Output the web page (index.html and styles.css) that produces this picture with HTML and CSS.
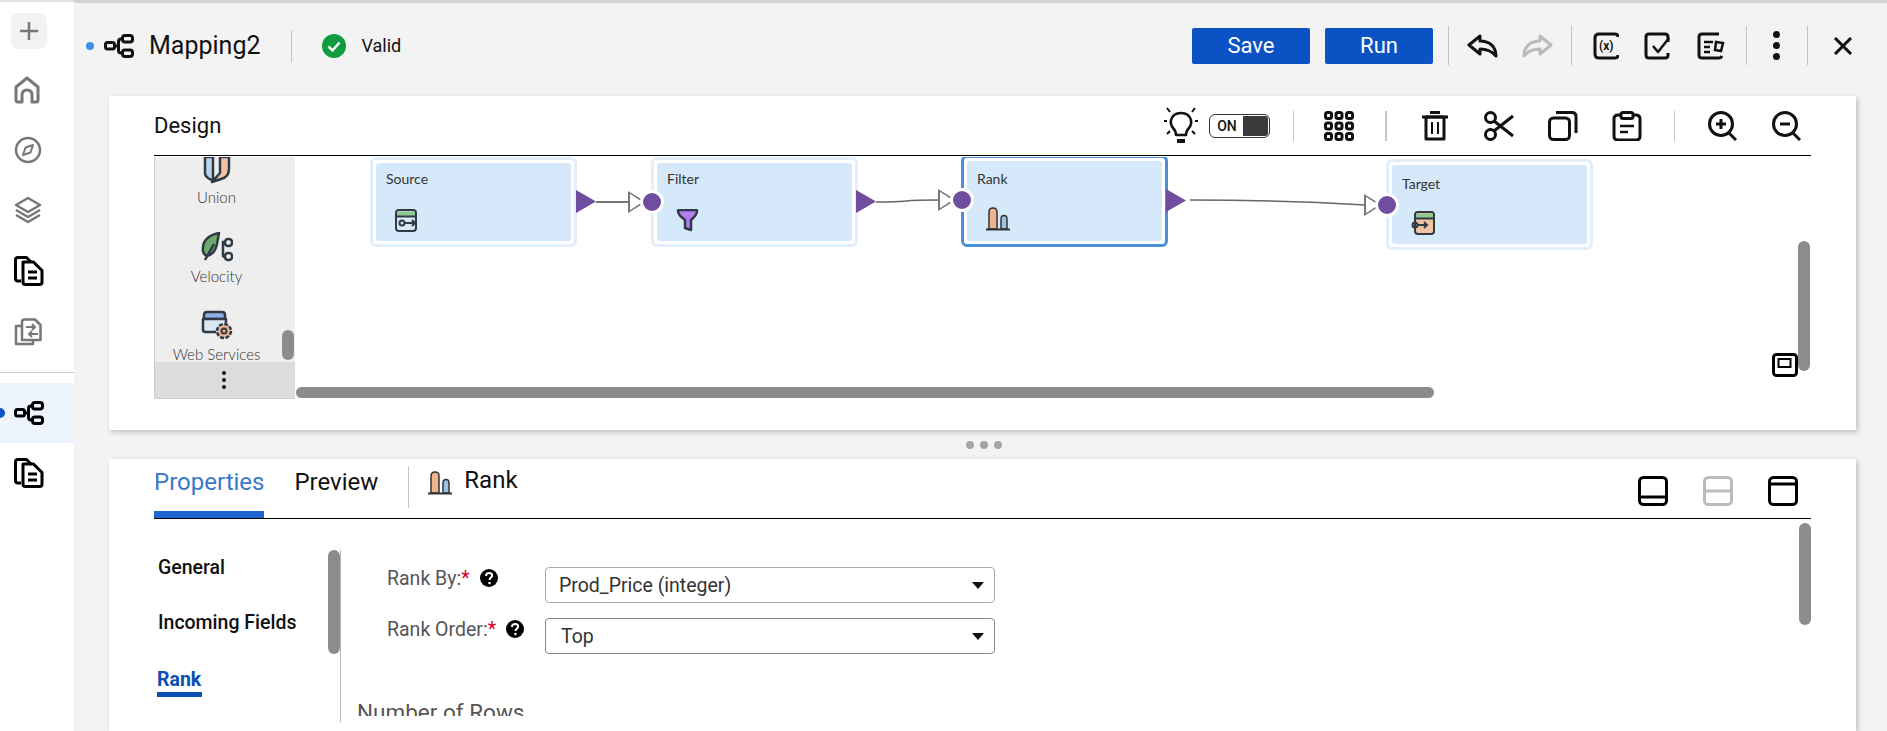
FILE: index.html
```html
<!DOCTYPE html>
<html lang="en">
<head>
    <meta charset="UTF-8">
    <meta name="viewport" content="width=device-width, initial-scale=1.0">
    <title>Mapping2</title>
    <link rel="stylesheet" href="styles.css">
</head>
<body>
    <svg class="defs" width="0" height="0">
        <symbol id="i-map" viewBox="0 0 30 24">
            <g fill="none" stroke="currentColor" stroke-width="3">
                <rect x="1.5" y="8.5" width="9" height="6.5" rx="2"/>
                <rect x="18.5" y="1.5" width="10" height="6.5" rx="2.5"/>
                <rect x="18.5" y="16" width="10" height="6.5" rx="2.5"/>
                <path d="M10.5 12h4M18.5 5h-1.500q-2.500 0-2.500 2.500v9q0 2.500 2.500 2.500h1.500"/>
            </g>
        </symbol>
        <symbol id="i-doc" viewBox="0 0 30 30">
            <g fill="none" stroke="currentColor" stroke-width="3" stroke-linejoin="round">
                <path d="M7 25H4q-2.500 0-2.500-2.500V4q0-2.500 2.500-2.500h8.500L17 6"/>
                <path d="M9 6h10.500l8.500 8.500V26q0 2.500-2.500 2.500H11.500Q9 28.500 9 26z"/>
                <path d="M14 16h9M14 22h9"/>
            </g>
        </symbol>
        <symbol id="i-rank" viewBox="0 0 24 24">
            <path d="M3 22V5q0-4 4-4t4 4v17z" fill="#eeb48f" stroke="#333" stroke-width="1.500"/>
            <path d="M15 22V12q0-3.500 3-3.500t3 3.500v10z" fill="#9cc3e6" stroke="#333" stroke-width="1.500"/>
            <path d="M0 22.500h24" stroke="#333" stroke-width="2"/>
        </symbol>
        <symbol id="i-help" viewBox="0 0 18 18">
            <circle cx="9" cy="9" r="9" fill="#000"/>
            <path d="M6 7q0-3 3.200-3 3 0 3 2.500c0 2-2.700 2.200-2.700 4.500" fill="none" stroke="#fff" stroke-width="2"/>
            <circle cx="9.500" cy="14" r="1.300" fill="#fff"/>
        </symbol>
    </svg>

    <div class="app">
        <nav class="sidebar">
            <div class="new-btn">
                <svg width="22" height="22" viewBox="0 0 22 22"><path d="M11 2v18M2 11h18" stroke="#777" stroke-width="2.500"/></svg>
            </div>
            <div class="side-icons">
                <svg class="side-icon" width="26" height="28" viewBox="0 0 26 28" fill="none" stroke="#777" stroke-width="3" stroke-linejoin="round"><path d="M8 26H4q-2 0-2-2V11L13 2l11 9v13q0 2-2 2h-4v-7q0-5-5-5t-5 5z"/></svg>
                <svg class="side-icon" width="28" height="28" viewBox="0 0 28 28" fill="none" stroke="#777" stroke-width="2.500"><circle cx="14" cy="14" r="12"/><path d="M19 9l-2.500 7.500L9 19l2.500-7.500z" stroke-width="2" stroke-linejoin="round"/></svg>
                <svg class="side-icon" width="28" height="28" viewBox="0 0 28 28" fill="none" stroke="#777" stroke-width="2.500" stroke-linejoin="round"><path d="M14 2l12 7-12 7L2 9z"/><path d="M2 14l12 7 12-7M2 19l12 7 12-7"/></svg>
                <svg class="side-icon side-black" width="30" height="30"><use href="#i-doc"/></svg>
                <svg class="side-icon" width="28" height="28" viewBox="0 0 28 28" fill="none" stroke="#777" stroke-width="2.500" stroke-linejoin="round"><path d="M8 22V4q0-2.500 2.500-2.500H21l5.500 5.500v15z"/><path d="M8 8H2v18h17v-4"/><path d="M12 9h9M18 6l3 3-3 3M24 16h-9M18 13l-3 3 3 3" stroke-width="2"/></svg>
            </div>
            <div class="side-rule"></div>
            <div class="side-active"><svg width="30" height="24" class="side-black"><use href="#i-map"/></svg></div>
            <svg class="side-icon side-black side-last" width="30" height="30"><use href="#i-doc"/></svg>
        </nav>

        <main class="main">
            <header class="topbar">
                <span class="dirty-dot"></span>
                <svg width="30" height="24"><use href="#i-map"/></svg>
                <span class="mapping-name">Mapping2</span>
                <span class="sep sep-title"></span>
                <svg class="valid-icon" width="24" height="24" viewBox="0 0 24 24"><circle cx="12" cy="12" r="12" fill="#0f9d3f"/><path d="M6.500 12.500l4 4 7-8" fill="none" stroke="#fff" stroke-width="2.500"/></svg>
                <span class="valid-text">Valid</span>

                <div class="top-actions">
                    <button class="btn">Save</button>
                    <button class="btn btn-run">Run</button>
                    <span class="sep sep-a"></span>
                    <svg width="32" height="24" viewBox="0 0 32 24" fill="none" stroke="#111" stroke-width="3" stroke-linejoin="round"><path d="M13 2L2 11l11 9v-5c6 0 11 1 16 7 0-9-6-15-16-15z"/></svg>
                    <svg class="redo" width="32" height="24" viewBox="0 0 32 24" fill="none" stroke="#bbb" stroke-width="3" stroke-linejoin="round"><path d="M19 2l11 9-11 9v-5c-6 0-11 1-16 7 0-9 6-15 16-15z"/></svg>
                    <span class="sep sep-b"></span>
                    <svg width="26" height="28" viewBox="0 0 26 28" fill="none" stroke="#111" stroke-width="3"><path d="M22 2H6Q2 2 2 6v16q0 4 4 4h16"/><path d="M22 2q3 0 3 3M22 26q3 0 3-3" stroke-width="3"/><text x="6" y="18" class="icon-x">(x)</text></svg>
                    <svg class="gap-a" width="28" height="28" viewBox="0 0 28 28" fill="none" stroke="#111" stroke-width="3" stroke-linejoin="round"><path d="M24 10V5q0-3-3-3H5Q2 2 2 5v18q0 3 3 3h16q3 0 3-3v-2"/><path d="M9 14l5 6 11-14" stroke-width="2.500"/></svg>
                    <svg class="gap-a" width="28" height="28" viewBox="0 0 28 28" fill="none" stroke="#111" stroke-width="3"><path d="M22 2H5Q2 2 2 5v18q0 3 3 3h17q2 0 3-2"/><path d="M7 10h9M7 15h6M7 20h6" stroke-width="2.500"/><path d="M19 10l7 1-2 8-6-1z" stroke-width="2.500"/></svg>
                    <span class="sep sep-c"></span>
                    <span class="kebab"><i></i><i></i><i></i></span>
                    <span class="sep sep-d"></span>
                    <svg class="close" width="20" height="18" viewBox="0 0 20 18" fill="none" stroke="#111" stroke-width="3"><path d="M2 1l16 16M18 1L2 17"/></svg>
                </div>
            </header>

            <section class="panel panel-design">
                <div class="panel-head">
                    <span class="panel-title">Design</span>
                    <div class="tools">
                        <svg width="34" height="42" viewBox="0 0 34 42" fill="none" stroke="#111" stroke-width="2.500"><path d="M12 30q0-4-3-7-3-4-2-8 2-7 10-7t10 7q1 4-2 8-3 3-3 7z" stroke-linejoin="round"/><path d="M13 36h8" stroke-width="4"/><path d="M3 3l3 4M31 3l-3 4M0 16h3M34 16h-3M3 29l3-3M31 29l-3-3" stroke-width="2"/></svg>
                        <div class="toggle"><span class="toggle-on">ON</span><span class="toggle-knob"></span></div>
                        <span class="sep sep-tool-a"></span>
                        <svg width="30" height="30" viewBox="0 0 30 30" fill="none" stroke="#111" stroke-width="3"><rect x="1.500" y="1.500" width="6" height="6" rx="2"/><rect x="12" y="1.500" width="6" height="6" rx="2"/><rect x="22.500" y="1.500" width="6" height="6" rx="2"/><rect x="1.500" y="12" width="6" height="6" rx="2"/><rect x="12" y="12" width="6" height="6" rx="2"/><rect x="22.500" y="12" width="6" height="6" rx="2"/><rect x="1.500" y="22.500" width="6" height="6" rx="2"/><rect x="12" y="22.500" width="6" height="6" rx="2"/><rect x="22.500" y="22.500" width="6" height="6" rx="2"/></svg>
                        <span class="sep sep-tool-b"></span>
                        <svg width="30" height="30" viewBox="0 0 30 30" fill="none" stroke="#111" stroke-width="3"><path d="M2 6h26M10 1.500h10"/><path d="M6 6v22h18V6z" stroke-linejoin="round"/><path d="M12 11v12M18 11v12" stroke-width="2"/></svg>
                        <svg class="tool-gap" width="30" height="30" viewBox="0 0 30 30" fill="none" stroke="#111" stroke-width="3"><circle cx="6.500" cy="6.500" r="5"/><circle cx="6.500" cy="23.500" r="5"/><path d="M10 10l19 15M10 20L29 5"/></svg>
                        <svg class="tool-gap" width="30" height="30" viewBox="0 0 30 30" fill="none" stroke="#111" stroke-width="3"><rect x="1.500" y="7" width="20" height="21.500" rx="4"/><path d="M8 1.500h16q4 0 4 4V22"/></svg>
                        <svg class="tool-gap" width="30" height="30" viewBox="0 0 30 30" fill="none" stroke="#111" stroke-width="3"><path d="M9 4H6Q2 4 2 8v17q0 4 4 4h18q4 0 4-4V8q0-4-4-4h-3"/><rect x="9" y="1.500" width="12" height="6" rx="2"/><path d="M8 15h14M8 21h8" stroke-width="2.500"/></svg>
                        <span class="sep sep-tool-c"></span>
                        <svg width="30" height="30" viewBox="0 0 30 30" fill="none" stroke="#111" stroke-width="3"><circle cx="14" cy="13" r="11.500"/><path d="M22 22l7 7M9 13h10M14 8v10"/></svg>
                        <svg class="tool-gap" width="30" height="30" viewBox="0 0 30 30" fill="none" stroke="#111" stroke-width="3"><circle cx="14" cy="13" r="11.500"/><path d="M22 22l7 7M9 13h10"/></svg>
                    </div>
                </div>

                <div class="design-body">
                    <aside class="palette">
                        <div class="palette-list">
                            <div class="palette-item palette-union">
                                <svg width="28" height="28" viewBox="0 0 28 28" stroke="#2f3a45" stroke-width="2.500" stroke-linejoin="round"><path d="M2 1v16q0 3 3 5l5 3V1z" fill="#bcd4ee"/><path d="M26 1v12q0 8-8 10l-9 3 8-9V1z" fill="#f2c3a2"/></svg>
                                <span>Union</span>
                            </div>
                            <div class="palette-item">
                                <svg width="32" height="30" viewBox="0 0 32 30" fill="none" stroke="#2f3a45" stroke-width="2.500"><path d="M18 1q-15 3-16 14-1 7 4 9 8-2 10-12z" fill="#6cab6c" stroke-linejoin="round"/><path d="M4 28l9-16"/><rect x="24" y="7" width="7" height="7" rx="3"/><rect x="24" y="21" width="7" height="7" rx="3"/><path d="M24 10h-2v13q0 2 2 2"/></svg>
                                <span>Velocity</span>
                            </div>
                            <div class="palette-item">
                                <svg width="32" height="30" viewBox="0 0 32 30" stroke="#2f3a45" stroke-width="2.500"><path d="M3 9V5q0-3 3-3h15q3 0 3 3v4z" fill="#8fb1e6"/><path d="M15 22H5q-3 0-3-2V9h23v4" fill="#dbe7f5" stroke-linejoin="round"/><circle cx="23" cy="21" r="7" fill="#eeb48f" stroke-dasharray="4 1.500"/><circle cx="23" cy="21" r="2.500" fill="none" stroke-width="2"/></svg>
                                <span>Web Services</span>
                            </div>
                        </div>
                        <div class="palette-more"><span class="kebab kebab-small"><i></i><i></i><i></i></span></div>
                        <span class="scroll scroll-palette"></span>
                    </aside>

                    <div class="canvas">
                        <svg class="links" width="1240" height="100" viewBox="0 0 1240 100" fill="none">
                            <path d="M301 45h32" stroke="#777" stroke-width="2"/>
                            <path d="M581 45q20 0 30-1 10-1 32-1" stroke="#666" stroke-width="1.500"/>
                            <path d="M895 43q90 0 175 5" stroke="#666" stroke-width="1.500"/>
                        </svg>
                        <div class="node node-source">
                            <span class="node-name">Source</span>
                            <svg class="node-icon" width="23" height="23" viewBox="0 0 23 23" stroke="#2f3a45" stroke-width="2"><rect x="1" y="1" width="20" height="21" rx="3" fill="#dbe7f5"/><path d="M2 2.500h18V7H2z" fill="#8fc78f" stroke="none"/><path d="M1 7.500h20" /><circle cx="7" cy="14" r="2.500" fill="none"/><path d="M9.500 14H20M17 11l3 3-3 3" fill="none"/></svg>
                        </div>
                        <div class="node node-filter">
                            <span class="node-name">Filter</span>
                            <svg class="node-icon" width="23" height="23" viewBox="0 0 23 23" stroke="#2f3a45" stroke-width="2.500" stroke-linejoin="round"><path d="M2 2q0-1 1-1h17q1 0 1 1 0 4-6 9v10l-6-2v-8Q2 6 2 2z" fill="#b37cf0"/></svg>
                        </div>
                        <div class="node node-rank">
                            <span class="node-name">Rank</span>
                            <svg class="node-icon" width="24" height="24"><use href="#i-rank"/></svg>
                        </div>
                        <div class="node node-target">
                            <span class="node-name">Target</span>
                            <svg class="node-icon" width="24" height="24" viewBox="0 0 24 24" stroke="#2f3a45" stroke-width="2"><rect x="4" y="1" width="19" height="22" rx="3" fill="#f2c3a2"/><path d="M5 2.500h17V7H5z" fill="#8fc78f" stroke="none"/><path d="M4 7.500h19"/><circle cx="4" cy="14" r="2.500" fill="none"/><path d="M6.500 14H16M13 11l3 3-3 3" fill="none"/></svg>
                        </div>
                        <span class="port-out port-source"></span>
                        <span class="port-in port-in-filter"></span>
                        <span class="port-dot dot-filter"></span>
                        <span class="port-out port-filter"></span>
                        <span class="port-in port-in-rank"></span>
                        <span class="port-dot dot-rank"></span>
                        <span class="port-out port-rank"></span>
                        <span class="port-in port-in-target"></span>
                        <span class="port-dot dot-target"></span>
                        <span class="scroll scroll-h"></span>
                        <span class="scroll scroll-v"></span>
                        <svg class="minimap" width="26" height="24" viewBox="0 0 26 24" fill="none" stroke="#000"><rect x="1.500" y="1.500" width="23" height="21" rx="3" stroke-width="3"/><rect x="6.500" y="6" width="12" height="8" stroke-width="2"/></svg>
                    </div>
                </div>
            </section>

            <div class="splitter"><i></i><i></i><i></i></div>

            <section class="panel panel-props">
                <div class="tabs">
                    <span class="tab tab-active">Properties</span>
                    <span class="tab">Preview</span>
                    <span class="sep sep-tab"></span>
                    <svg class="tab-icon" width="24" height="24"><use href="#i-rank"/></svg>
                    <span class="tab-node">Rank</span>
                    <div class="layout-btns">
                        <svg width="30" height="30" viewBox="0 0 30 30" fill="none" stroke="#000" stroke-width="3"><rect x="1.500" y="1.500" width="27" height="27" rx="4"/><path d="M2 21h26"/></svg>
                        <svg width="30" height="30" viewBox="0 0 30 30" fill="none" stroke="#bbb" stroke-width="3"><rect x="1.500" y="1.500" width="27" height="27" rx="4"/><path d="M2 15h26"/></svg>
                        <svg width="30" height="30" viewBox="0 0 30 30" fill="none" stroke="#000" stroke-width="3"><rect x="1.500" y="1.500" width="27" height="27" rx="4"/><path d="M2 8h26"/></svg>
                    </div>
                </div>

                <div class="props-body">
                    <div class="prop-nav">
                        <div class="prop-item">General</div>
                        <div class="prop-item">Incoming Fields</div>
                        <div class="prop-item prop-item-active"><span>Rank</span></div>
                        <span class="scroll scroll-nav"></span>
                    </div>
                    <div class="prop-form">
                        <div class="form-row">
                            <label class="form-label">Rank By:<span class="req">*</span><svg class="help" width="18" height="18"><use href="#i-help"/></svg></label>
                            <div class="select select-first">Prod_Price (integer)</div>
                        </div>
                        <div class="form-row">
                            <label class="form-label">Rank Order:<span class="req">*</span><svg class="help" width="18" height="18"><use href="#i-help"/></svg></label>
                            <div class="select select-second">Top</div>
                        </div>
                        <div class="form-section">Number of Rows</div>
                    </div>
                    <span class="scroll scroll-props"></span>
                </div>
            </section>
        </main>
    </div>
</body>
</html>
```

FILE: styles.css
```css
* {
    box-sizing: border-box;
}

html, body {
    height: 100%;
}

body {
    margin: 0;
    font-family: Roboto, Arial, sans-serif;
    color: #111;
    background-color: #f3f3f3;
    overflow: hidden;
}

.defs {
    position: absolute;
}

.app {
    display: flex;
    height: 731px;
}

/* left rail */
.sidebar {
    width: 74px;
    flex-shrink: 0;
    display: flex;
    flex-direction: column;
    background-color: #fff;
    border-top: 2px solid #e2e2e2;
    color: #000;
}

.new-btn {
    width: 36px;
    height: 36px;
    margin: 11px 0 0 11px;
    display: flex;
    align-items: center;
    justify-content: center;
    background-color: #f2f2f2;
    border-radius: 8px;
}

.side-icons {
    display: flex;
    flex-direction: column;
    gap: 32px;
    padding: 27px 0 0 14px;
}

.side-black {
    color: #000;
}

.side-rule {
    height: 1px;
    margin-top: 26px;
    background-color: #ccc;
}

.side-active {
    height: 60px;
    margin-top: 10px;
    padding-left: 14px;
    display: flex;
    align-items: center;
    background-color: #eef4fd;
    position: relative;
}

.side-active::before {
    content: "";
    position: absolute;
    left: -5px;
    top: 25px;
    width: 10px;
    height: 10px;
    border-radius: 50%;
    background-color: #0b52c4;
}

.side-last {
    margin: 15px 0 0 14px;
}

/* main column */
.main {
    flex: 1;
    min-width: 0;
    display: flex;
    flex-direction: column;
    border-top: 3px solid #d2d2d2;
}

.topbar {
    height: 93px;
    flex-shrink: 0;
    display: flex;
    align-items: center;
    padding: 0 34px 8px 12px;
}

.dirty-dot {
    width: 8px;
    height: 8px;
    margin-right: 10px;
    border-radius: 50%;
    background-color: #3b8fe8;
}

.mapping-name {
    margin-left: 15px;
    font-size: 25px;
}

.sep {
    width: 1px;
    background-color: #c4c4c4;
    flex-shrink: 0;
}

.sep-title {
    height: 32px;
    margin: 0 30px 0 31px;
}

.valid-text {
    margin-left: 15px;
    font-size: 18px;
}

.top-actions {
    margin-left: auto;
    display: flex;
    align-items: center;
}

.btn {
    width: 118px;
    height: 36px;
    border: none;
    border-radius: 2px;
    background-color: #0b52c4;
    color: #fff;
    font-family: Roboto, Arial, sans-serif;
    font-size: 22px;
}

.btn-run {
    width: 108px;
    margin-left: 15px;
}

.top-actions .sep {
    height: 39px;
}

.sep-a {
    margin: 0 18px 0 15px;
}

.redo {
    margin-left: 22px;
}

.sep-b {
    margin: 0 21px 0 18px;
}

.gap-a {
    margin-left: 25px;
}

.sep-c {
    margin: 0 26px 0 21px;
}

.kebab {
    display: flex;
    flex-direction: column;
    gap: 4px;
}

.kebab i {
    width: 7px;
    height: 7px;
    border-radius: 50%;
    background-color: #111;
}

.sep-d {
    margin: 0 25px 0 27px;
}

.close {
    display: block;
}

.icon-x {
    font-family: Roboto, Arial, sans-serif;
    font-size: 12px;
    font-weight: 700;
    fill: #111;
    stroke: none;
}

/* white panels */
.panel {
    margin: 0 31px 0 35px;
    padding: 0 45px;
    background-color: #fff;
    box-shadow: 2px 2px 5px rgba(0, 0, 0, 0.22);
}

.panel-design {
    height: 334px;
    flex-shrink: 0;
}

.panel-head {
    height: 60px;
    display: flex;
    align-items: center;
    justify-content: space-between;
    border-bottom: 1px solid #000;
}

.panel-title {
    font-size: 22px;
}

.tools {
    display: flex;
    align-items: center;
    margin-right: 10px;
}

.toggle {
    width: 61px;
    height: 24px;
    margin-left: 11px;
    display: flex;
    padding: 1px;
    border: 1px solid #333;
    border-radius: 6px;
}

.toggle-on {
    width: 32px;
    text-align: center;
    font-size: 14px;
    font-weight: 500;
    line-height: 20px;
}

.toggle-knob {
    flex: 1;
    background-color: #3a3a3a;
    border-radius: 0 3px 3px 0;
}

.tools .sep {
    height: 30px;
}

.sep-tool-a {
    margin: 0 30px 0 23px;
}

.sep-tool-b {
    margin: 0 33px 0 31px;
    width: 2px;
}

.tool-gap {
    margin-left: 34px;
}

.sep-tool-c {
    margin: 0 32px;
}

.design-body {
    display: flex;
    height: 242px;
    margin-top: 1px;
}

.palette {
    width: 141px;
    flex-shrink: 0;
    display: flex;
    flex-direction: column;
    position: relative;
    background-color: #eee;
    border-left: 1px solid #ccc;
    border-bottom: 1px solid #ccc;
}

.palette-list {
    flex: 1;
    min-height: 0;
    overflow: hidden;
    padding-top: 1px;
}

.palette-item {
    height: 78px;
    display: flex;
    flex-direction: column;
    align-items: center;
    padding-right: 17px;
    font-family: Lato, Arial, sans-serif;
    font-size: 15px;
    font-weight: 300;
    color: #333;
}

.palette-item span {
    margin-top: 5px;
}

.palette-union {
    height: 60px;
    margin-bottom: 14px;
}

.palette-union svg {
    margin-top: -2px;
}

.palette-union span {
    margin-top: 4px;
}

.palette-more {
    height: 36px;
    flex-shrink: 0;
    display: flex;
    align-items: center;
    justify-content: center;
    padding-right: 2px;
    background-color: #ddd;
}

.kebab-small {
    gap: 3px;
}

.kebab-small i {
    width: 4px;
    height: 4px;
}

.scroll {
    position: absolute;
    background-color: #8c8c8c;
    border-radius: 6px;
}

.scroll-palette {
    right: 1px;
    top: 173px;
    width: 12px;
    height: 30px;
}

/* mapping canvas */
.canvas {
    flex: 1;
    position: relative;
    overflow: hidden;
}

.links {
    position: absolute;
    left: 0;
    top: 0;
}

.node {
    position: absolute;
    top: 0;
    width: 207px;
    height: 90px;
    background-color: #fff;
    border: 3px solid #e2eef9;
    border-radius: 6px;
}

.node::before {
    content: "";
    position: absolute;
    inset: 3px;
    background-color: #d5e9fb;
    border-radius: 3px;
}

.node-source {
    left: 75px;
}

.node-filter {
    left: 356px;
}

.node-rank {
    left: 666px;
    top: -2px;
    height: 92px;
    border-color: #4a90d9;
}

.node-target {
    left: 1091px;
    top: 2px;
    height: 91px;
}

.node-name {
    position: absolute;
    left: 13px;
    top: 10px;
    font-family: Lato, Arial, sans-serif;
    font-size: 14px;
    color: #333;
}

.node-rank .node-name {
    top: 12px;
}

.node-target .node-name {
    top: 13px;
}

.node-icon {
    position: absolute;
    left: 22px;
    top: 49px;
}

.port-out {
    position: absolute;
    width: 20px;
    height: 23px;
    background-color: #6f4ea0;
    clip-path: polygon(0 0, 100% 50%, 0 100%);
}

.port-source {
    left: 281px;
    top: 33px;
}

.port-filter {
    left: 561px;
    top: 33px;
}

.port-rank {
    left: 871px;
    top: 32px;
}

.port-in {
    position: absolute;
    width: 0;
    height: 0;
}

.port-in::before {
    content: "";
    position: absolute;
    left: 0;
    top: -11px;
    width: 18px;
    height: 22px;
    background-color: #777;
    clip-path: polygon(0 0, 100% 50%, 0 100%);
}

.port-in::after {
    content: "";
    position: absolute;
    left: 1.500px;
    top: -8.500px;
    width: 13px;
    height: 17px;
    background-color: #fff;
    clip-path: polygon(0 0, 100% 50%, 0 100%);
}

.port-in-filter {
    left: 333px;
    top: 45px;
}

.port-in-rank {
    left: 643px;
    top: 43px;
}

.port-in-target {
    left: 1069px;
    top: 48px;
}

.port-dot {
    position: absolute;
    width: 24px;
    height: 24px;
    background-color: #6f4ea0;
    border: 3px solid #fff;
    border-radius: 50%;
}

.dot-filter {
    left: 345px;
    top: 33px;
}

.dot-rank {
    left: 655px;
    top: 31px;
}

.dot-target {
    left: 1080px;
    top: 36px;
}

.scroll-h {
    left: 1px;
    top: 230px;
    width: 1138px;
    height: 11px;
}

.scroll-v {
    right: 1px;
    top: 84px;
    width: 12px;
    height: 130px;
}

.minimap {
    position: absolute;
    right: 13px;
    top: 196px;
}

.splitter {
    height: 29px;
    flex-shrink: 0;
    display: flex;
    align-items: center;
    justify-content: center;
    gap: 6px;
    padding-left: 6px;
}

.splitter i {
    width: 8px;
    height: 8px;
    border-radius: 50%;
    background-color: #a5a5a5;
}

/* properties panel */
.panel-props {
    flex: 1;
    min-height: 0;
    overflow: hidden;
}

.tabs {
    height: 60px;
    display: flex;
    align-items: flex-start;
    border-bottom: 1px solid #000;
}

.tab {
    height: 59px;
    padding-top: 9px;
    margin-right: 30px;
    font-size: 24px;
}

.tab-active {
    color: #3a78c9;
    border-bottom: 7px solid #1f66d1;
}

.sep-tab {
    height: 42px;
    margin: 7px 19px 0 0;
}

.tab-icon {
    margin-top: 12px;
}

.tab-node {
    margin: 7px 0 0 12px;
    font-size: 24px;
}

.layout-btns {
    margin: 17px 13px 0 auto;
    display: flex;
    gap: 35px;
}

.props-body {
    display: flex;
    margin-top: 31px;
    height: 172px;
    position: relative;
}

.prop-nav {
    width: 187px;
    flex-shrink: 0;
    position: relative;
    padding-left: 4px;
    border-right: 1px solid #b5b5b5;
    font-size: 19.500px;
    font-weight: 500;
}

.prop-item {
    height: 24px;
    margin: 6px 0 31px;
    line-height: 24px;
}

.prop-item-active {
    margin-top: 33px;
    color: #0b4fb3;
    font-weight: 700;
}

.prop-item-active span {
    display: inline-block;
    height: 29px;
    padding: 0 1px 0 0;
    margin-left: -1px;
    border-bottom: 5px solid #0b4fb3;
}

.scroll-nav {
    right: 0;
    top: 0;
    width: 12px;
    height: 104px;
}

.prop-form {
    flex: 1;
    height: 166px;
    overflow: hidden;
    padding: 17px 0 0 46px;
}

.form-row {
    display: flex;
    margin-bottom: 15px;
}

.form-label {
    width: 158px;
    flex-shrink: 0;
    display: flex;
    align-items: flex-start;
    height: 24px;
    font-size: 19.500px;
    line-height: 24px;
    color: #555;
}

.req {
    color: #d0021b;
}

.help {
    margin: 2px 0 0 10px;
}

.select {
    width: 450px;
    height: 36px;
    padding-left: 13px;
    position: relative;
    font-size: 19.500px;
    line-height: 35px;
    color: #333;
    border: 1px solid #aaa;
    border-radius: 4px;
}

.select::after {
    content: "";
    position: absolute;
    right: 10px;
    top: 14px;
    border-left: 6px solid transparent;
    border-right: 6px solid transparent;
    border-top: 7px solid #111;
}

.select-second {
    padding-left: 15px;
    border-color: #888;
}

.form-section {
    margin: 46px 0 0 -30px;
    font-size: 22.500px;
    line-height: 24px;
    color: #555;
}

.scroll-props {
    right: 0;
    top: -27px;
    width: 12px;
    height: 102px;
}
```
